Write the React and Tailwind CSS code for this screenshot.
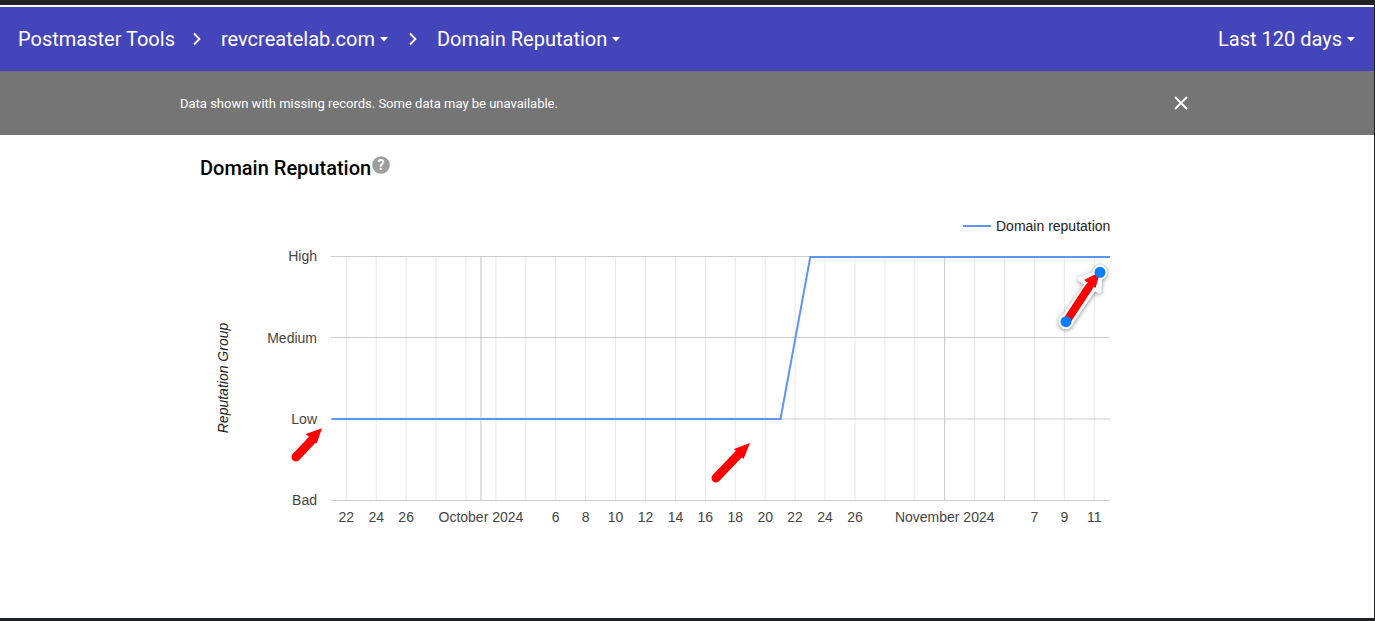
import React from 'react';

const dayX = (d) => 346.3 + 14.96 * d;

// days counted from Sep 22
const minorDays = [0, 2, 4, 6, 8, 10, 12, 14, 16, 18, 20, 22, 24, 26, 28, 30, 32, 34, 36, 38, 42, 44, 46, 48, 50];
const majorDays = [9, 40];
const rows = [
  { label: 'High', y: 256.5, textY: 261 },
  { label: 'Medium', y: 337.5, textY: 343 },
  { label: 'Low', y: 419, textY: 424 },
  { label: 'Bad', y: 500.5, textY: 505 },
];
const ticks = [
  ['22', 0], ['24', 2], ['26', 4], ['October 2024', 9], ['6', 14], ['8', 16], ['10', 18], ['12', 20],
  ['14', 22], ['16', 24], ['18', 26], ['20', 28], ['22', 30], ['24', 32], ['26', 34],
  ['November 2024', 40], ['7', 46], ['9', 48], ['11', 50],
];

function Caret() {
  return (
    <svg width="10" height="5" viewBox="0 0 10 5" className="ml-[4px] mt-[1px]">
      <path d="M1 0h8L5 4.5z" fill="#fff" />
    </svg>
  );
}

function Chevron({ className }) {
  return (
    <svg width="10" height="14" viewBox="0 0 10 14" className={className}>
      <path d="M2 1.5 7.5 7 2 12.5" fill="none" stroke="#fff" strokeWidth="1.8" />
    </svg>
  );
}

function Crumb({ children, caret }) {
  return (
    <div className="flex items-center">
      <span>{children}</span>
      {caret && <Caret />}
    </div>
  );
}

function RedArrow({ tail, neck, tip, barbA, barbB, width = 9 }) {
  return (
    <g>
      <line x1={tail[0]} y1={tail[1]} x2={neck[0]} y2={neck[1]} stroke="#ff0000" strokeWidth={width} strokeLinecap="round" />
      <polygon points={`${tip} ${barbA} ${barbB}`} fill="#ff0000" />
    </g>
  );
}

function ReputationChart() {
  return (
    <svg width="920" height="340" viewBox="200 205 920 340" className="block font-['Liberation_Sans',Arial,sans-serif]">
      {minorDays.map((d) => (
        <line key={d} x1={dayX(d)} x2={dayX(d)} y1="256" y2="500" stroke="#e8e8e8" />
      ))}
      {rows.map((r) => (
        <line key={r.label} x1="331" x2="1110" y1={r.y} y2={r.y} stroke="#cccccc" />
      ))}
      {majorDays.map((d) => (
        <line key={d} x1={dayX(d)} x2={dayX(d)} y1="256" y2="500" stroke="#c4c4c4" />
      ))}
      <polyline points="331.5,419 780.5,419 810.3,257 1110,257" fill="none" stroke="#5f94fa" strokeWidth="2" />

      {rows.map((r) => (
        <text key={r.label} x="317" y={r.textY} textAnchor="end" fontSize="14" fill="#444444">{r.label}</text>
      ))}
      {ticks.map(([label, d]) => (
        <text key={label + d} x={dayX(d)} y="522" textAnchor="middle" fontSize="14" fill="#444444">{label}</text>
      ))}
      <text transform="translate(228 378) rotate(-90)" textAnchor="middle" fontSize="14" fontStyle="italic" fill="#222222">Reputation Group</text>

      <line x1="963" x2="991" y1="226" y2="226" stroke="#5f94fa" strokeWidth="2" />
      <text x="996" y="231" fontSize="14" fill="#222222">Domain reputation</text>

      <RedArrow tail={[296, 457]} neck={[313, 439]} tip={[322, 428.3]} barbA={[305.7, 434]} barbB={[316.7, 443.5]} />
      <RedArrow tail={[716, 478]} neck={[738, 455]} tip={[750, 443]} barbA={[734, 449]} barbB={[743.5, 459]} />

      {/* selected arrow with its handles */}
      <g className="drop-shadow-[0_1px_2px_rgba(0,0,0,0.45)]">
        <line x1="1066" y1="322" x2="1092" y2="284" stroke="#fff" strokeWidth="13" strokeLinecap="round" />
        <polygon points="1100,272 1080,279 1099,291" fill="#fff" stroke="#fff" strokeWidth="5" strokeLinejoin="round" />
        <circle cx="1066" cy="321.7" r="7.5" fill="#fff" />
        <circle cx="1100" cy="272.3" r="7.5" fill="#fff" />
      </g>
      <RedArrow tail={[1066, 322]} neck={[1089, 287]} tip={[1100, 272]} barbA={[1084, 280]} barbB={[1095.5, 288]} width={8} />
      <circle cx="1066" cy="321.7" r="5.5" fill="#0a7cff" />
      <circle cx="1100" cy="272.3" r="5.5" fill="#0a7cff" />
    </svg>
  );
}

export default function App() {
  return (
    <div className="flex h-[621px] flex-col overflow-hidden bg-[#202124] pt-[5px] pb-[3px] pr-px font-[Roboto,sans-serif]">
      <div className="flex flex-1 flex-col bg-white pt-[2px]">
        <header className="flex h-16 items-center justify-between bg-[#4444bb] pl-[18px] pr-[18px] text-[20px] text-white">
          <nav className="flex items-center">
            <Crumb>Postmaster Tools</Crumb>
            <Chevron className="ml-[17px] mr-[19px]" />
            <Crumb caret>revcreatelab.com</Crumb>
            <Chevron className="ml-[19px] mr-[19px]" />
            <Crumb caret>Domain Reputation</Crumb>
          </nav>
          <Crumb caret>Last 120 days</Crumb>
        </header>

        <div className="flex h-16 items-center justify-between bg-[#757575] pl-[180px] pr-[186px] text-[13px] text-white">
          <span className="pt-px">Data shown with missing records. Some data may be unavailable.</span>
          <svg width="14" height="14" viewBox="0 0 14 14">
            <path d="M1 1l12 12M13 1 1 13" stroke="#fff" strokeWidth="1.8" fill="none" />
          </svg>
        </div>

        <main className="pl-[200px]">
          <div className="flex h-[70px] items-start pt-[20px]">
            <h1 className="text-[20px] font-medium leading-[26px] text-black">Domain Reputation</h1>
            <svg width="20" height="20" viewBox="0 0 20 20">
              <circle cx="10" cy="10" r="8.8" fill="#9e9e9e" />
              <text x="10" y="15" textAnchor="middle" fontSize="14" fontWeight="700" fill="#fff">?</text>
            </svg>
          </div>
          <ReputationChart />
        </main>
      </div>
    </div>
  );
}
